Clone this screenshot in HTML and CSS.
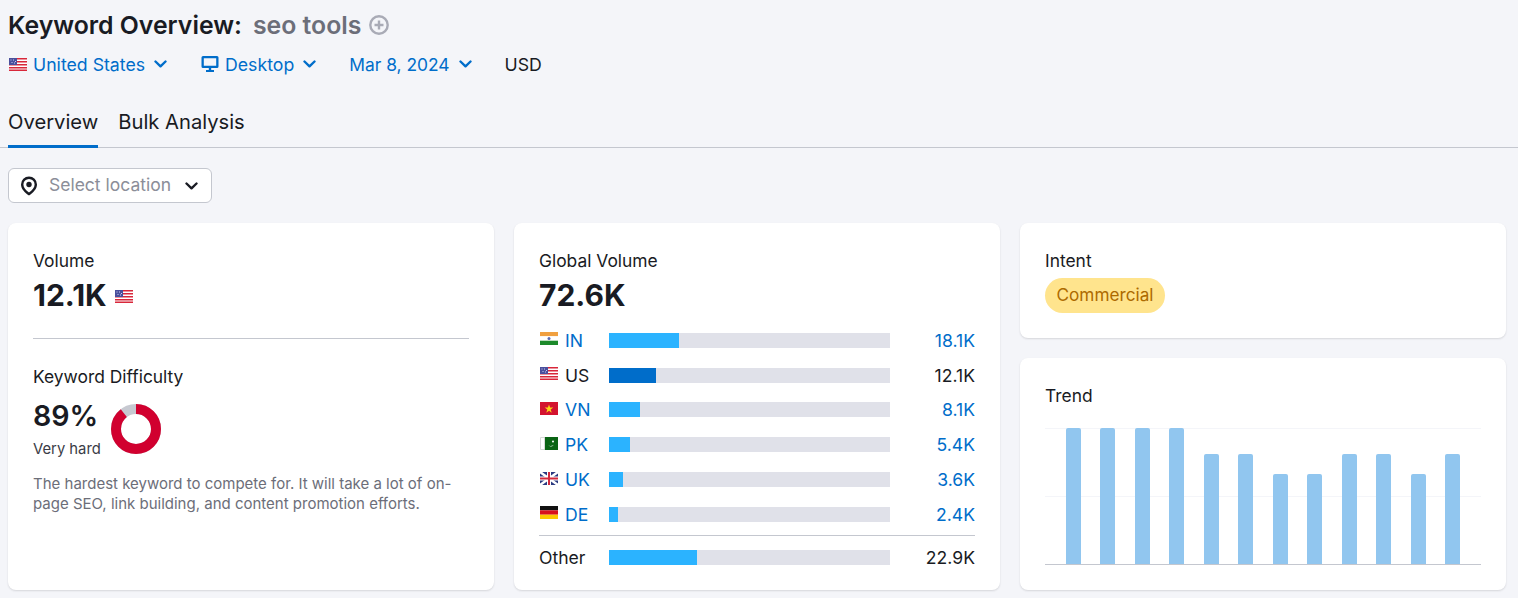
FILE: index.html
```html
<!DOCTYPE html>
<html lang="en">
<head>
    <meta charset="UTF-8">
    <title>Keyword Overview</title>
    <link rel="stylesheet" href="styles.css">
</head>
<body>
    <svg class="defs" width="0" height="0">
        <defs>
            <symbol id="flag-us" viewBox="0 0 18 13">
                <rect width="18" height="13" fill="#fff"/>
                <path d="M0 0h18v1.500H0zM0 3h18v1.500H0zM0 6h18v1.500H0zM0 9h18v1.500H0zM0 11.600h18V13H0z" fill="#d8273a"/>
                <rect width="8" height="7" fill="#4a4f9c"/>
                <path d="M1.500 1.500h1v1h-1zM4 1.500h1v1H4zM6 3h1v1H6zM2.500 4h1v1h-1zM5 4.500h1v1H5z" fill="#c9cdf0"/>
            </symbol>
            <symbol id="arrow" viewBox="0 0 13 8">
                <path d="M1.500 1.500 6.500 6.300l5-4.800" fill="none" stroke="currentColor" stroke-width="2.400" stroke-linecap="round" stroke-linejoin="round"/>
            </symbol>
        </defs>
    </svg>

    <div class="title">
        <h1>Keyword Overview:</h1>
        <span class="keyword">seo tools</span>
        <svg class="add" width="20" height="20" viewBox="0 0 20 20">
            <circle cx="10" cy="10" r="8.700" fill="none" stroke="#a9abb6" stroke-width="2.400"/>
            <path d="M10 5.500v9M5.500 10h9" stroke="#a9abb6" stroke-width="2.400"/>
        </svg>
    </div>

    <div class="filters">
        <a class="filter"><svg class="flag"><use href="#flag-us"/></svg>United States<svg class="arrow"><use href="#arrow"/></svg></a>
        <a class="filter f-device">
            <svg class="monitor" width="18" height="18" viewBox="0 0 18 18">
                <path d="M2 1h14a1.500 1.500 0 0 1 1.500 1.500v9A1.500 1.500 0 0 1 16 13H2a1.500 1.500 0 0 1-1.500-1.500v-9A1.500 1.500 0 0 1 2 1zm.8 2.300v7.400h12.400V3.300zM7.800 13h2.400v2H13v2H5v-2h2.800z" fill="#006dca" fill-rule="evenodd"/>
            </svg>Desktop<svg class="arrow"><use href="#arrow"/></svg>
        </a>
        <a class="filter f-date">Mar 8, 2024<svg class="arrow"><use href="#arrow"/></svg></a>
        <span class="currency">USD</span>
    </div>

    <div class="tabs">
        <a class="tab on">Overview</a>
        <a class="tab">Bulk Analysis</a>
    </div>

    <button class="location">
        <svg width="18" height="20" viewBox="0 0 18 20">
            <path d="M9 .5A8 8 0 0 0 1 8.500c0 4.400 3.800 8.200 8 11 4.200-2.800 8-6.600 8-11A8 8 0 0 0 9 .5zm0 2.400a5.600 5.600 0 0 1 5.600 5.600c0 2.900-2.400 5.700-5.600 8-3.200-2.300-5.600-5.100-5.600-8A5.600 5.600 0 0 1 9 2.900z" fill="#191b23"/>
            <circle cx="9" cy="8.500" r="2.700" fill="#191b23"/>
        </svg>
        <span>Select location</span>
        <svg class="arrow dark"><use href="#arrow"/></svg>
    </button>

    <div class="cards">
        <div class="card">
            <div class="label">Volume</div>
            <div class="big">12.1K <svg class="flag"><use href="#flag-us"/></svg></div>
            <hr class="line">
            <div class="label kd-label">Keyword Difficulty</div>
            <div class="kd">
                <div>
                    <div class="kd-value">89%</div>
                    <div class="hard">Very hard</div>
                </div>
                <svg class="donut" width="50" height="50" viewBox="0 0 50 50">
                    <circle cx="25" cy="25" r="20" fill="none" stroke="#c7c9d1" stroke-width="10"/>
                    <circle cx="25" cy="25" r="20" fill="none" stroke="#d1002f" stroke-width="10" stroke-dasharray="111.800 125.700" transform="rotate(-90 25 25)"/>
                </svg>
            </div>
            <p class="note">The hardest keyword to compete for. It will take a lot of on-page SEO, link building, and content promotion efforts.</p>
        </div>

        <div class="card">
            <div class="label">Global Volume</div>
            <div class="big">72.6K</div>
            <div class="rows">
                <div class="row">
                    <a class="cc">
                        <svg class="flag" viewBox="0 0 18 13"><rect width="18" height="4.300" fill="#f0a040"/><rect y="4.300" width="18" height="4.400" fill="#fff"/><rect y="8.700" width="18" height="4.300" fill="#1c8a2a"/><circle cx="9" cy="6.500" r="1.500" fill="#5a6ab0"/></svg>IN</a>
                    <div class="track"><div class="fill" style="width:70px"></div></div>
                    <a class="val">18.1K</a>
                </div>
                <div class="row">
                    <span class="cc dark-text"><svg class="flag"><use href="#flag-us"/></svg>US</span>
                    <div class="track"><div class="fill cur" style="width:47px"></div></div>
                    <span class="val dark-text">12.1K</span>
                </div>
                <div class="row">
                    <a class="cc">
                        <svg class="flag" viewBox="0 0 18 13"><rect width="18" height="13" fill="#d3132f"/><path d="m9 2.500 1.100 3.100h3.200l-2.600 2 1 3.100L9 8.800l-2.700 1.900 1-3.100-2.600-2h3.200z" fill="#fbd116"/></svg>VN</a>
                    <div class="track"><div class="fill" style="width:31px"></div></div>
                    <a class="val">8.1K</a>
                </div>
                <div class="row">
                    <a class="cc">
                        <svg class="flag" viewBox="0 0 18 13"><rect width="18" height="13" fill="#fff"/><rect x="4.500" width="13.500" height="13" fill="#0a6414"/><path d="M.5.500h4v12h-4z" fill="none" stroke="#d8d8d8"/><path d="M14 7.500a3.400 3.400 0 0 1-6 .2 3.300 3.300 0 0 0 3.500 1 3 3 0 0 0 2.500-1.200z" fill="#fff"/><circle cx="13" cy="4.500" r="1" fill="#fff"/></svg>PK</a>
                    <div class="track"><div class="fill" style="width:21px"></div></div>
                    <a class="val">5.4K</a>
                </div>
                <div class="row">
                    <a class="cc">
                        <svg class="flag" viewBox="0 0 18 13"><rect width="18" height="13" fill="#2a3a80"/><path d="M0 0l18 13M18 0 0 13" stroke="#fff" stroke-width="2.500"/><path d="M9 0v13M0 6.500h18" stroke="#fff" stroke-width="4"/><path d="M9 0v13M0 6.500h18" stroke="#d3283c" stroke-width="2"/></svg>UK</a>
                    <div class="track"><div class="fill" style="width:14px"></div></div>
                    <a class="val">3.6K</a>
                </div>
                <div class="row">
                    <a class="cc">
                        <svg class="flag" viewBox="0 0 18 13"><rect width="18" height="4.300" fill="#111"/><rect y="4.300" width="18" height="4.400" fill="#d8101c"/><rect y="8.700" width="18" height="4.300" fill="#fcc800"/></svg>DE</a>
                    <div class="track"><div class="fill" style="width:9px"></div></div>
                    <a class="val">2.4K</a>
                </div>
                <div class="row other">
                    <span class="dark-text">Other</span>
                    <div class="track"><div class="fill" style="width:88px"></div></div>
                    <span class="val dark-text">22.9K</span>
                </div>
            </div>
        </div>

        <div class="side">
            <div class="card card-intent">
                <div class="label">Intent</div>
                <span class="pill">Commercial</span>
            </div>
            <div class="card card-trend">
                <div class="label">Trend</div>
                <div class="chart">
                    <div class="gridline"></div>
                    <div class="gridline mid"></div>
                    <div class="bars">
                        <i style="height:136px"></i>
                        <i style="height:136px"></i>
                        <i style="height:136px"></i>
                        <i style="height:136px"></i>
                        <i style="height:110px"></i>
                        <i style="height:110px"></i>
                        <i style="height:90px"></i>
                        <i style="height:90px"></i>
                        <i style="height:110px"></i>
                        <i style="height:110px"></i>
                        <i style="height:90px"></i>
                        <i style="height:110px"></i>
                    </div>
                </div>
            </div>
        </div>
    </div>
</body>
</html>
```

FILE: styles.css
```css
* {
    box-sizing: border-box;
}
body {
    margin: 0;
    padding: 8px 12px 0 8px;
    background: #f4f5f9;
    color: #191b23;
    font-family: Inter, "Liberation Sans", sans-serif;
    font-size: 16px;
    height: 598px;
    overflow: hidden;
}
.defs {
    position: absolute;
}
.title {
    display: flex;
    align-items: center;
    height: 33px;
}
.title h1 {
    margin: 0;
    font-size: 24.800px;
    font-weight: 600;
}
.keyword {
    margin-left: 11px;
    font-size: 24.800px;
    font-weight: 600;
    color: #6c6e79;
}
.add {
    margin-left: 8px;
}
.filters {
    display: flex;
    align-items: center;
    height: 28px;
    margin-top: 9px;
    font-size: 17.700px;
}
.filter {
    display: flex;
    align-items: center;
    color: #006dca;
}
.flag {
    width: 18px;
    height: 13px;
}
.filters .flag {
    margin: 0 6px 0 1px;
}
.arrow {
    width: 13px;
    height: 8px;
    margin-left: 9px;
    color: #006dca;
}
.arrow.dark {
    color: #191b23;
    margin-left: 0;
}
.f-device {
    margin-left: 34px;
}
.monitor {
    margin-right: 6px;
}
.f-date {
    margin-left: 33px;
    font-size: 17.400px;
}
.currency {
    margin-left: 33px;
}
.tabs {
    display: flex;
    gap: 20px;
    margin: 27px -12px 0 -8px;
    padding-left: 8px;
    height: 43px;
    border-bottom: 1px solid #c4c7cf;
}
.tab {
    height: 43px;
    line-height: 34px;
    font-size: 20.200px;
    font-weight: 400;
}
.tab.on {
    border-bottom: 3px solid #006dca;
}
.location {
    display: flex;
    align-items: center;
    width: 204px;
    height: 35px;
    margin-top: 20px;
    padding: 0 13px 0 11px;
    background: #fff;
    border: 1px solid #c4c7cf;
    border-radius: 6px;
    font-family: inherit;
    font-size: 17.500px;
    color: #8b8e99;
}
.location span {
    flex: 1;
    margin-left: 11px;
    padding-bottom: 2px;
    text-align: left;
}
.cards {
    display: grid;
    grid-template-columns: repeat(3, 486px);
    grid-template-rows: 367px;
    gap: 20px;
    margin-top: 20px;
}
.card {
    background: #fff;
    border-radius: 8px;
    box-shadow: 0 1px 2px rgba(25, 27, 35, .14);
    padding: 26px 25px 0;
}
.label {
    font-size: 17.400px;
    line-height: 24px;
}
.big {
    display: flex;
    align-items: center;
    gap: 8px;
    margin-top: 4px;
    font-size: 30px;
    font-weight: 700;
    line-height: 36px;
}
.big .flag {
    margin-top: 2px;
}
.line {
    margin: 25px 0 0;
    border: 0;
    border-top: 1px solid #c4c7cf;
}
.kd-label {
    margin-top: 26px;
}
.kd {
    display: flex;
    align-items: center;
    gap: 10px;
    margin-top: 9px;
}
.kd-value {
    font-size: 28.600px;
    font-weight: 600;
    line-height: 36px;
}
.hard {
    margin-top: 5px;
    font-size: 14.800px;
    line-height: 20px;
    color: #3a3c46;
}
.note {
    margin: 15px 0 0;
    font-size: 15px;
    line-height: 20px;
    color: #6c6e79;
}
.rows {
    margin-top: 10px;
    font-size: 17.600px;
}
.row {
    display: grid;
    grid-template-columns: 70px 281px 1fr;
    align-items: center;
    height: 34.800px;
}
.cc {
    display: flex;
    align-items: center;
    gap: 7px;
    color: #006dca;
}
.cc .flag {
    margin: -3px 0 0 1px;
}
.track {
    height: 15px;
    background: #e0e1e9;
}
.fill {
    height: 15px;
    background: #2bb3ff;
}
.fill.cur {
    background: #006dca;
}
.val {
    text-align: right;
    color: #006dca;
}
.dark-text {
    color: #191b23;
}
.other {
    margin-top: 3px;
    border-top: 1px solid #c4c7cf;
    height: 44px;
}
.side {
    display: flex;
    flex-direction: column;
    gap: 20px;
}
.card-intent {
    height: 115px;
}
.pill {
    display: inline-block;
    margin-top: 5px;
    padding: 0 11.500px;
    height: 35px;
    line-height: 33px;
    border-radius: 18px;
    background: #ffe48d;
    color: #ad6a00;
    font-size: 17.200px;
}
.card-trend {
    flex: 1;
}
.chart {
    position: relative;
    height: 137px;
    margin-top: 20px;
    border-bottom: 1px solid #c4c7cf;
}
.gridline {
    position: absolute;
    left: 0;
    right: 0;
    top: 0;
    border-top: 1px solid #f4f5f9;
}
.gridline.mid {
    top: 68px;
}
.bars {
    position: relative;
    display: grid;
    grid-template-columns: repeat(12, 1fr);
    align-items: end;
    justify-items: center;
    height: 136px;
    padding: 0 11px;
}
.bars i {
    display: block;
    width: 15px;
    background: #91c6ef;
    border-radius: 2px 2px 0 0;
}
```
